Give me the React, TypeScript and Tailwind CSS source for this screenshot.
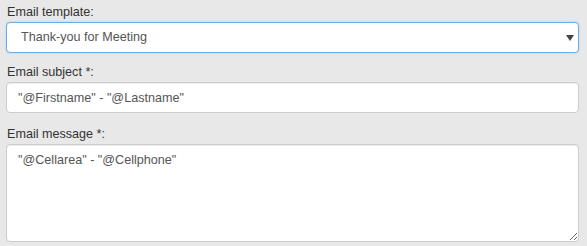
import { useState } from "react";

export default function App() {
  const [template, setTemplate] = useState("Thank-you for Meeting");
  const [subject, setSubject] = useState('"@Firstname" - "@Lastname"');
  const [message, setMessage] = useState('"@Cellarea" - "@Cellphone"');

  return (
    <div className="min-h-[246px] w-[587px] bg-[#e8e8e8] px-[6px] pt-[3px] font-['Liberation_Sans',Arial,sans-serif] text-[12.6px] text-[#333]">
      <div>
        <label className="block leading-[19px] pl-px">Email template:</label>
        <div className="relative">
          <select
            value={template}
            onChange={(e) => setTemplate(e.target.value)}
            className="block h-[31px] w-[573px] appearance-none rounded-[4px] border border-[#66afe9] bg-white pl-[14px] pr-8 text-[12.6px] text-[#555] shadow-[0_0_2px_rgba(102,175,233,0.5)] outline-none"
          >
            <option>Thank-you for Meeting</option>
            <option>Follow-up</option>
          </select>
          <svg
            className="pointer-events-none absolute right-[7px] top-[13px]"
            width="8"
            height="6"
            viewBox="0 0 8 6"
          >
            <path d="M0 0h8L4 6z" fill="#444" />
          </svg>
        </div>
      </div>

      <div className="mt-[10px]">
        <label className="block leading-[19px] pl-px">Email subject *:</label>
        <input
          value={subject}
          onChange={(e) => setSubject(e.target.value)}
          className="block h-[31px] w-[573px] rounded-[4px] border border-[#ccc] bg-white px-[11px] text-[12.6px] text-[#555] shadow-[inset_0_1px_1px_rgba(0,0,0,0.075)] outline-none"
        />
      </div>

      <div className="mt-[12px]">
        <label className="block leading-[19px] pl-px">Email message *:</label>
        <textarea
          value={message}
          onChange={(e) => setMessage(e.target.value)}
          className="block h-[98px] w-[573px] rounded-[4px] border border-[#ccc] bg-white px-[11px] pt-[6px] text-[12.6px] leading-[18px] text-[#555] shadow-[inset_0_1px_1px_rgba(0,0,0,0.075)] outline-none"
        />
      </div>
    </div>
  );
}
